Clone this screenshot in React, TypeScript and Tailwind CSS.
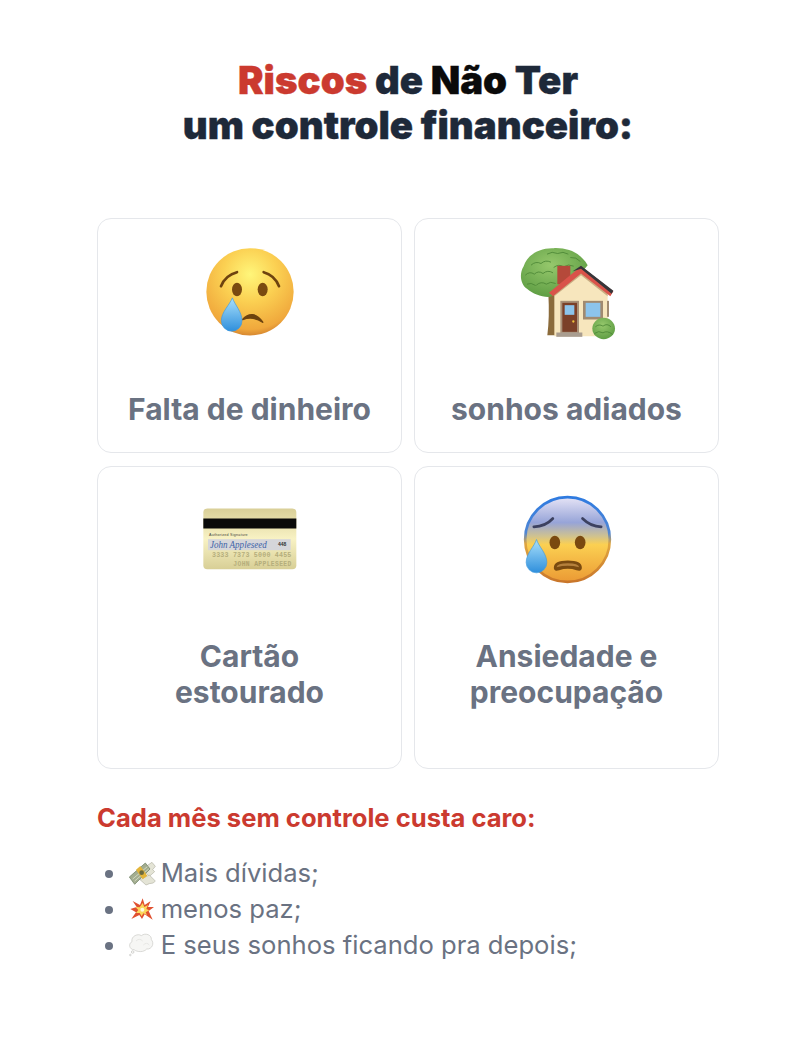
const inter = { fontFamily: "Inter, sans-serif" };

function CryingFace() {
  return (
    <svg width="100" height="97" viewBox="327 105 300 290">
      <defs>
        <radialGradient id="cf" cx="0.5" cy="0.3" r="0.74">
          <stop offset="0" stopColor="#fff67a" />
          <stop offset="0.42" stopColor="#fbd052" />
          <stop offset="0.85" stopColor="#f0a83c" />
          <stop offset="1" stopColor="#c9762a" />
        </radialGradient>
        <linearGradient id="ct" x1="0" y1="0" x2="0" y2="1">
          <stop offset="0" stopColor="#a9e0fb" />
          <stop offset="1" stopColor="#2f8fdc" />
        </linearGradient>
      </defs>
      <circle cx="477" cy="245" r="131" fill="url(#cf)" />
      <ellipse cx="438" cy="238" rx="15" ry="20" fill="#7a4a10" />
      <ellipse cx="515" cy="238" rx="15" ry="20" fill="#7a4a10" />
      <path d="M390 228Q403 195 438 186" stroke="#6e430f" strokeWidth="8" fill="none" strokeLinecap="round" />
      <path d="M564 228Q551 195 518 186" stroke="#6e430f" strokeWidth="8" fill="none" strokeLinecap="round" />
      <path d="M455 328Q485 296 515 336Q485 316 455 328Z" fill="#6e430f" stroke="#6e430f" strokeWidth="5" strokeLinejoin="round" />
      <path d="M424 263C432 285 453 305 453 332A31 31 0 0 1 391 332C391 305 416 285 424 263Z" fill="url(#ct)" stroke="#3f9ae0" strokeWidth="2" />
    </svg>
  );
}

const leaves = [
  "M345 195Q358 182 372 192Q384 180 398 190",
  "M362 165Q376 152 392 160Q405 148 422 156",
  "M410 132Q425 122 442 130Q458 122 474 132",
  "M430 172Q445 160 460 170Q474 160 490 168",
  "M378 225Q392 212 408 222Q420 212 436 220",
  "M398 190Q412 178 428 188",
  "M350 222Q362 216 376 226",
  "M480 142Q498 140 510 154",
];

function House() {
  return (
    <svg width="100" height="97" viewBox="320 105 300 290">
      <defs>
        <radialGradient id="tr" cx="0.45" cy="0.35" r="0.75">
          <stop offset="0" stopColor="#96c86c" />
          <stop offset="1" stopColor="#57983e" />
        </radialGradient>
      </defs>
      <path d="M414 250H436V375H411Q418 320 414 250Z" fill="#8b6b3b" />
      <path d="M420 260C395 262 368 252 350 236C330 222 326 190 340 168C350 136 385 112 430 114C475 112 512 130 532 165L470 240Z" fill="url(#tr)" />
      <g stroke="#4a8635" strokeWidth="2.5" fill="none">
        {leaves.map((d) => (
          <path key={d} d={d} />
        ))}
      </g>
      <rect x="441" y="167" width="39" height="55" fill="#b5493a" />
      <path d="M432 255L512 188L592 255V378H432Z" fill="#f7e6bd" />
      <path d="M432 258L512 195L592 258L592 250L512 186L432 250Z" fill="#c9ae82" />
      <path d="M416 248L512 168L609 243L600 258L512 190L428 258Z" fill="#d9534a" />
      <path d="M486 184L512 167L609 242L604 251L512 176Z" fill="#36363a" />
      <rect x="450" y="272" width="56" height="97" fill="#a89078" />
      <rect x="456" y="278" width="44" height="87" fill="#7b4029" />
      <rect x="463" y="285" width="29" height="29" fill="#8cc4ec" />
      <circle cx="489" cy="334" r="3.5" fill="#f0c33c" />
      <rect x="518" y="272" width="60" height="56" fill="#a08a70" />
      <rect x="526" y="278" width="44" height="42" fill="#8cc4ec" />
      <rect x="590" y="272" width="6" height="48" fill="#a08a70" />
      <rect x="438" y="367" width="78" height="13" fill="#a99d90" />
      <ellipse cx="580" cy="355" rx="34" ry="32" fill="url(#tr)" />
      <path d="M555 350Q566 340 578 348Q590 338 602 350M552 370Q565 360 578 368Q590 360 606 372" stroke="#4a8635" strokeWidth="2.5" fill="none" />
    </svg>
  );
}

function CreditCard() {
  return (
    <svg width="100" height="97" viewBox="28 -6 300 290">
      <defs>
        <linearGradient id="cc" x1="0" y1="0" x2="0" y2="1">
          <stop offset="0" stopColor="#d9cf98" />
          <stop offset="0.5" stopColor="#f8f2c4" />
          <stop offset="1" stopColor="#d8cf96" />
        </linearGradient>
      </defs>
      <rect x="38" y="40" width="279" height="182" rx="12" fill="url(#cc)" />
      <rect x="38" y="70" width="279" height="30" fill="#0a0a0a" />
      <text x="55" y="122" fontSize="11" textLength="116" fontFamily="Liberation Sans, sans-serif" fill="#45453a">Authorized Signature</text>
      <rect x="52" y="132" width="248" height="33" fill="#d5d6da" />
      <text x="58" y="160" fontSize="30" textLength="170" lengthAdjust="spacingAndGlyphs" fontStyle="italic" fontFamily="Liberation Serif, serif" fill="#3f63a8">John Appleseed</text>
      <text x="262" y="153" fontSize="15" fontWeight="700" fontFamily="Liberation Sans, sans-serif" fill="#333">448</text>
      <text x="64" y="187" fontSize="20" textLength="238" fontWeight="700" fontFamily="Liberation Mono, monospace" fill="#b5ae7c">3333 7373 5000 4455</text>
      <text x="128" y="212" fontSize="19" textLength="174" fontWeight="700" fontFamily="Liberation Mono, monospace" fill="#b5ae7c">JOHN APPLESEED</text>
    </svg>
  );
}

function FearfulFace() {
  return (
    <svg width="100" height="97" viewBox="19.5 24 300 290">
      <defs>
        <linearGradient id="ff" x1="0" y1="0" x2="0" y2="1">
          <stop offset="0" stopColor="#e6e4f6" />
          <stop offset="0.3" stopColor="#97a4d8" />
          <stop offset="0.46" stopColor="#cfc290" />
          <stop offset="0.56" stopColor="#fbd052" />
          <stop offset="1" stopColor="#eb9a34" />
        </linearGradient>
        <linearGradient id="fe" x1="0" y1="0" x2="0" y2="1">
          <stop offset="0" stopColor="#2f7be0" />
          <stop offset="0.42" stopColor="#4f86d4" />
          <stop offset="0.55" stopColor="#e0a640" />
          <stop offset="1" stopColor="#c9762a" />
        </linearGradient>
        <linearGradient id="ft" x1="0" y1="0" x2="0" y2="1">
          <stop offset="0" stopColor="#a9e0fb" />
          <stop offset="1" stopColor="#2f8fdc" />
        </linearGradient>
      </defs>
      <circle cx="171" cy="163" r="127" fill="url(#ff)" stroke="url(#fe)" strokeWidth="8" />
      <path d="M70 125Q105 124 127 100" stroke="#3c4160" strokeWidth="8" fill="none" strokeLinecap="round" />
      <path d="M272 125Q240 124 216 100" stroke="#3c4160" strokeWidth="8" fill="none" strokeLinecap="round" />
      <ellipse cx="133" cy="172" rx="16" ry="20" fill="#7a4a10" />
      <ellipse cx="209" cy="172" rx="16" ry="20" fill="#7a4a10" />
      <path d="M130 248Q130 226 172 226Q214 226 214 248Q214 260 198 255Q172 247 146 255Q130 260 130 248Z" fill="#7a4a10" />
      <path d="M138 246Q140 234 172 234Q204 234 206 246Q172 238 138 246Z" fill="#b5803c" />
      <path d="M78 163C85 185 109 205 109 232A31 31 0 0 1 47 232C47 205 71 185 78 163Z" fill="url(#ft)" stroke="#3f9ae0" strokeWidth="2" />
    </svg>
  );
}

function MoneyWings() {
  return (
    <svg className="mr-[-2.5px] inline-block align-[-4px]" width="28" height="25" viewBox="96 180 84 75">
      <path d="M138 204L168 184L178 196L170 206L176 212L160 226Z" fill="#e4e4d6" stroke="#a3a392" strokeWidth="1.5" />
      <path d="M132 236L160 222L178 240L172 246L160 248L150 252Z" fill="#e4e4d6" stroke="#a3a392" strokeWidth="1.5" />
      <path d="M100 228L148 186L162 204L116 250Z" fill="#a3ad90" stroke="#667a5a" strokeWidth="2" />
      <path d="M110 234L154 197M116 240L158 204" stroke="#dde2ca" strokeWidth="2.5" />
      <path d="M120 206L133 195L154 224L140 235Z" fill="#e3b53a" />
      <circle cx="137" cy="215" r="7" fill="#6b6a3f" />
    </svg>
  );
}

function Collision() {
  return (
    <svg className="mr-[-2.5px] inline-block align-[-4px]" width="28" height="25" viewBox="98 292 84 75">
      <path d="M142 296L148 316L166 304L158 322L176 322L160 334L172 360L148 344L140 358L132 346L108 358L122 338L105 328L124 322L112 304L134 316Z" fill="#e0502f" />
      <path d="M142 310L147 322L158 316L153 328L162 332L151 338L155 346L144 341L139 350L133 340L122 340L129 331L120 322L133 323Z" fill="#fbd75c" />
      <circle cx="141" cy="330" r="6" fill="#fffbe0" />
    </svg>
  );
}

function ThoughtBalloon() {
  return (
    <svg className="mr-[-2.5px] inline-block align-[-4px]" width="28" height="25" viewBox="98 400 84 75">
      <path d="M116 450C102 450 98 432 110 426C106 410 128 400 138 408C150 398 170 406 168 420C178 430 170 450 154 448C146 458 126 458 116 450Z" fill="#f6f6f4" stroke="#c9c9c4" strokeWidth="2" />
      <path d="M122 424Q132 414 142 424M144 436Q154 426 162 436" stroke="#e0e0dc" strokeWidth="2" fill="none" />
      <circle cx="112" cy="457" r="4" fill="#f6f6f4" stroke="#b5b5b0" strokeWidth="1.5" />
      <circle cx="105" cy="466" r="2.5" fill="#f6f6f4" stroke="#b5b5b0" strokeWidth="1.5" />
    </svg>
  );
}

function Card({ emoji, className, children }: { emoji: React.ReactNode; className: string; children: React.ReactNode }) {
  return (
    <div className={`flex flex-col items-center rounded-[14px] border border-gray-200 bg-white pt-[26px] ${className}`}>
      <div className="h-[97px] w-[100px]">{emoji}</div>
      <p className="text-center text-[30px] leading-[36px] font-bold text-gray-500">{children}</p>
    </div>
  );
}

export default function App() {
  return (
    <div className="min-h-[1050px] bg-white pt-[58px]" style={inter}>
      <div className="ml-[97px] w-[622px]">
        <h1 className="text-center text-[38.4px] leading-[45px] font-black text-gray-800 [-webkit-text-stroke:0.4px]">
          <span className="text-[#cb3a2f]">Riscos</span> de <span className="text-[#0a0a0a]">Não</span> Ter
          <br />
          um controle financeiro:
        </h1>

        <div className="mt-[70px] grid grid-cols-2 gap-x-[12px] gap-y-[13px]">
          <Card emoji={<CryingFace />} className="h-[235px] gap-[49px]">Falta de dinheiro</Card>
          <Card emoji={<House />} className="h-[235px] gap-[49px]">sonhos adiados</Card>
          <Card emoji={<CreditCard />} className="h-[303px] gap-[48px]">Cartão<br />estourado</Card>
          <Card emoji={<FearfulFace />} className="h-[303px] gap-[48px]">Ansiedade e<br />preocupação</Card>
        </div>

        <h2 className="mt-[31px] text-[25.6px] leading-[36px] font-bold text-[#cb3a2f]">Cada mês sem controle custa caro:</h2>

        <ul className="mt-[19px] list-disc pl-[31px] text-[25.6px] leading-[36px] text-gray-500">
          <li><MoneyWings /> Mais dívidas;</li>
          <li><Collision /> menos paz;</li>
          <li><ThoughtBalloon /> E seus sonhos ficando pra depois;</li>
        </ul>
      </div>
    </div>
  );
}
